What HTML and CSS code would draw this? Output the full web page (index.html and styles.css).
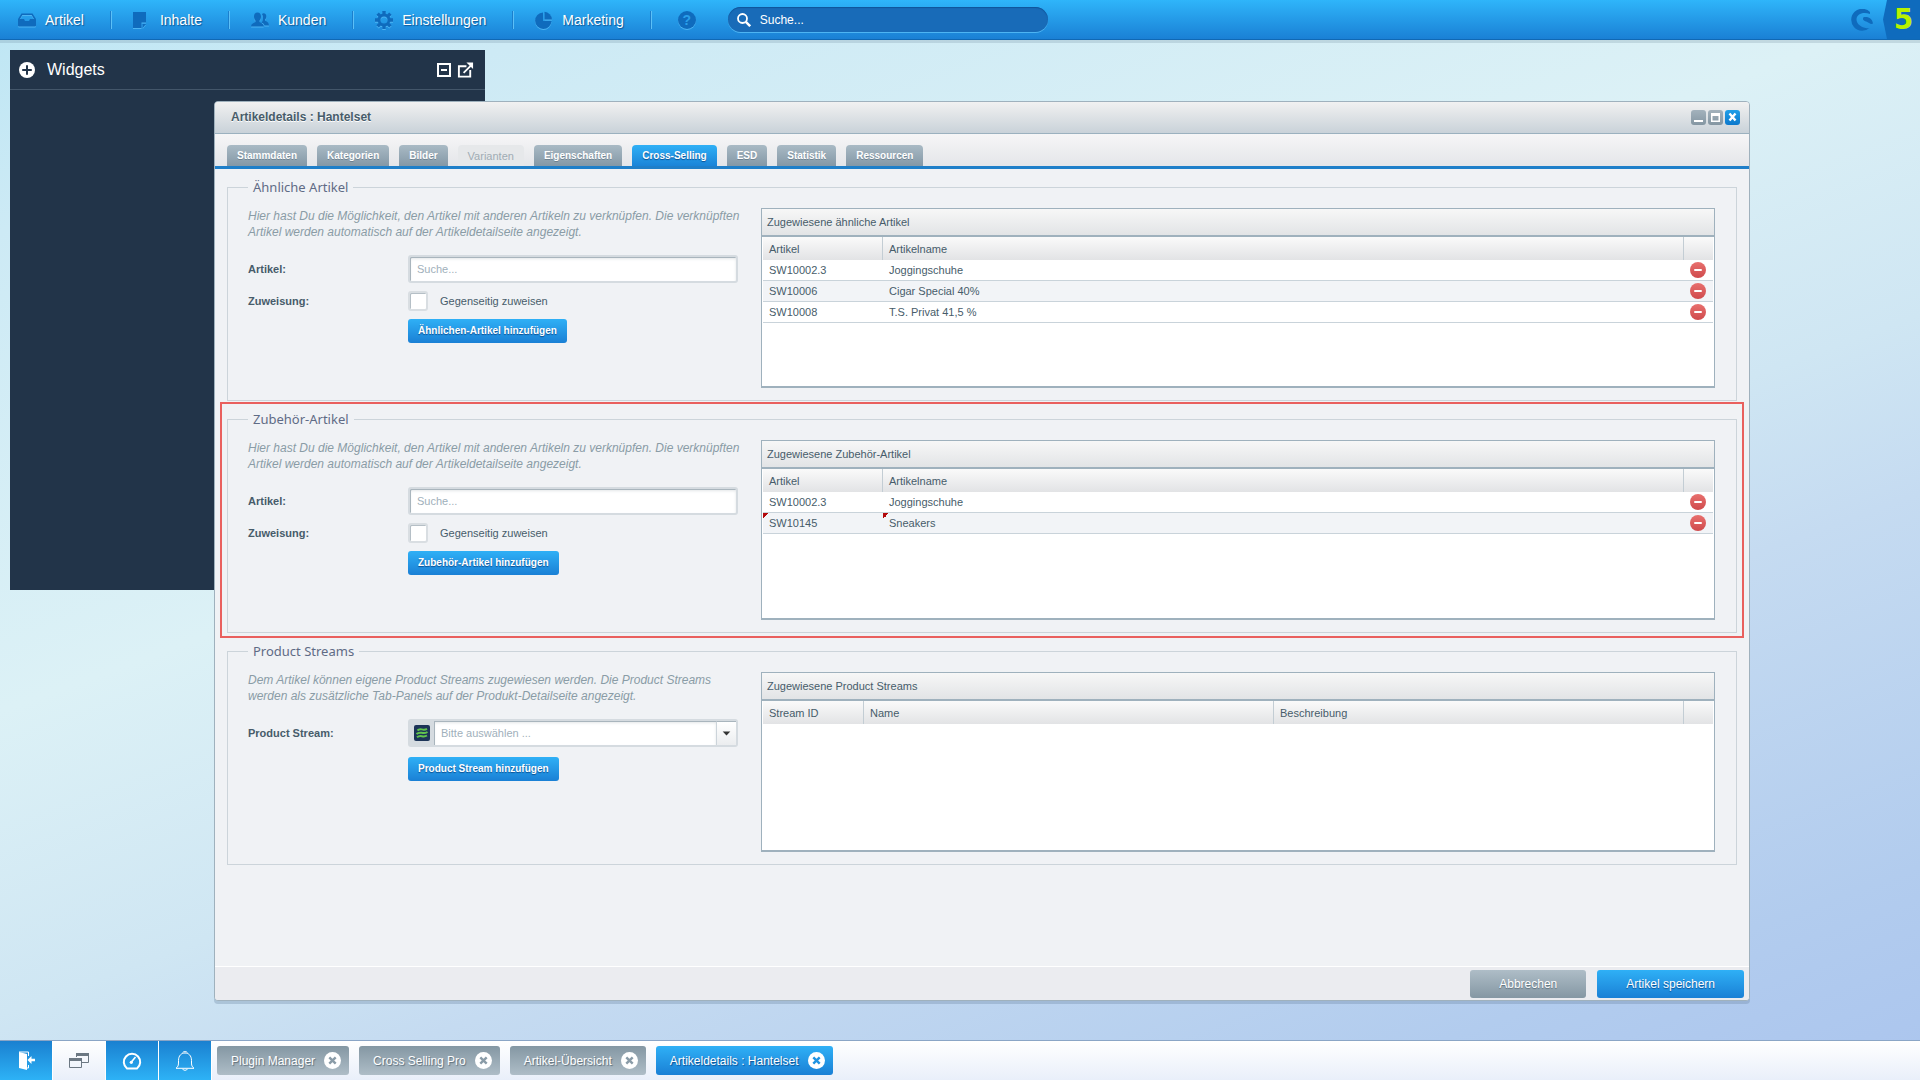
FILE: index.html
```html
<!DOCTYPE html>
<html lang="de">
<head>
<meta charset="utf-8">
<title>Artikeldetails : Hantelset</title>
<link rel="stylesheet" href="styles.css">
</head>
<body>
<svg class="sprite" aria-hidden="true">
  <defs>
    <linearGradient id="red" x1="0" y1="0" x2="0" y2="1"><stop offset="0" stop-color="#e8706e"/><stop offset="1" stop-color="#cf4a4c"/></linearGradient>
    <symbol id="i-remove" viewBox="0 0 16 16"><circle cx="8" cy="8" r="8" fill="url(#red)"/><rect x="4" y="7" width="8" height="2" rx="1" fill="#fff"/></symbol>
    <symbol id="i-close" viewBox="0 0 17 17"><circle cx="8.500" cy="8.500" r="8.500" fill="#fff"/><path d="M5.300 5.300l6.400 6.400M11.700 5.300l-6.400 6.400" stroke="currentColor" stroke-width="2.400"/></symbol>
  </defs>
</svg>

<header class="topbar">
  <nav class="menu">
    <a class="menu-item" href="#"><svg class="menu-icon" viewBox="0 0 18 18"><path d="M3.500 2.500h11L18 8v6.500a1 1 0 0 1-1 1H1a1 1 0 0 1-1-1V8zM4.300 4L2 8h4l1 2h4l1-2h4l-2.300-4z"/></svg>Artikel</a>
    <a class="menu-item" href="#"><svg class="menu-icon" viewBox="0 0 18 18"><path d="M0 1h13v10.500H8.500V17H0zM9.700 13H13l-3.300 4z"/></svg>Inhalte</a>
    <a class="menu-item" href="#"><svg class="menu-icon" viewBox="0 0 18 18"><path d="M11 3c1-1.400 4.300-1.200 4.300 2.200 0 1.800-.5 2.600-1.200 3.400v1.200c1 .8 3.700 1 3.900 4.700h-4.500c-.5-1.800-1.900-2.400-2.900-3 1.600-1.600 1.900-5.500.4-8.500z"/><path d="M6.500 1.500C9 1.500 10 3.300 10 5.500S9.200 8.800 8.500 9.500V11c1.200 1 4 1.300 4.200 4.500H0C.2 12.300 3.300 12 4.500 11V9.500C3.800 8.800 3 7.700 3 5.500s1-4 3.500-4z"/></svg>Kunden</a>
    <a class="menu-item" href="#"><svg class="menu-icon" viewBox="0 0 18 18"><circle cx="9" cy="9" r="5" fill="none" stroke="currentColor" stroke-width="3"/><path d="M9 0v3.500M9 14.500V18M0 9h3.500M14.500 9H18M2.600 2.600l2.500 2.500M12.900 12.900l2.500 2.500M2.600 15.400l2.500-2.500M12.900 5.100l2.500-2.500" stroke="currentColor" stroke-width="3.400"/></svg>Einstellungen</a>
    <a class="menu-item" href="#"><svg class="menu-icon" viewBox="0 0 18 18"><path d="M8 1.500V10h8.500A8.200 8.200 0 1 1 8 1.500z"/><path d="M9.500.8A8.300 8.300 0 0 1 17 8.500H9.500z"/></svg>Marketing</a>
  </nav>
  <button class="help" type="button" aria-label="Hilfe">?</button>
  <label class="search">
    <svg class="search-icon" viewBox="0 0 14 14"><circle cx="5.500" cy="5.500" r="4.500" fill="none" stroke="#fff" stroke-width="1.800"/><path d="M8.800 8.800l4.400 4.400" stroke="#fff" stroke-width="2.400"/></svg>
    <input class="search-input" type="search" placeholder="Suche..." aria-label="Suche">
  </label>
  <svg class="brand" viewBox="0 0 22 22"><path fill="#0f6bbd" d="M19 3A11 11 0 1 0 18.500 19c-1 .3-2.500.4-4 0C10 18 5.500 15 5.500 10.500 5.500 5 12 2.500 19 5z"/><path fill="#0f6bbd" d="M12.500 8.300c3-.8 8.500 0 9.500 6.200-1 .8-2.500.5-4-.5-2-1.400-6-2.200-6-4 0-.8.200-1.400.5-1.700z"/></svg>
  <div class="version">5</div>
</header>

<main class="desktop">
  <section class="widgets">
    <header class="widgets-head">
      <svg class="plus" viewBox="0 0 16 16"><circle cx="8" cy="8" r="8" fill="#fff"/><path d="M8 3.200v9.600M3.200 8h9.600" stroke="#223449" stroke-width="2"/></svg>
      <h2 class="widgets-title">Widgets</h2>
      <svg class="box-icon" viewBox="0 0 14 14"><path d="M1 1h12v12H1zM4 7h6" fill="none" stroke="#fff" stroke-width="2"/></svg>
      <svg class="out-icon" viewBox="0 0 18 18"><path d="M10 5H2v11h12V9" fill="none" stroke="#fff" stroke-width="2"/><path d="M7 12l9-9" stroke="#fff" stroke-width="2"/><path d="M10 1h7v7z" fill="#fff"/></svg>
    </header>
  </section>

  <section class="window">
    <header class="titlebar">
      <h1 class="title">Artikeldetails : Hantelset</h1>
      <button class="ctl" type="button" aria-label="Minimieren"><svg viewBox="0 0 15 15"><path d="M3 11h9" stroke="#fff" stroke-width="2"/></svg></button>
      <button class="ctl" type="button" aria-label="Maximieren"><svg viewBox="0 0 15 15"><path d="M3 3h9v9H3zM4.500 6v4.500h6V6z" fill="#fff" fill-rule="evenodd"/></svg></button>
      <button class="ctl ctl-close" type="button" aria-label="Schließen"><svg viewBox="0 0 15 15"><path d="M4.500 3.500l6 7M10.500 3.500l-6 7" stroke="#fff" stroke-width="2.400"/></svg></button>
    </header>
    <nav class="tabs">
      <button class="tab" type="button">Stammdaten</button>
      <button class="tab" type="button">Kategorien</button>
      <button class="tab" type="button">Bilder</button>
      <button class="tab" type="button" disabled>Varianten</button>
      <button class="tab" type="button">Eigenschaften</button>
      <button class="tab active" type="button">Cross-Selling</button>
      <button class="tab" type="button">ESD</button>
      <button class="tab" type="button">Statistik</button>
      <button class="tab" type="button">Ressourcen</button>
    </nav>

    <form class="body">
      <fieldset class="group">
        <legend class="legend">Ähnliche Artikel</legend>
        <div class="group-cols">
          <div>
            <p class="hint">Hier hast Du die Möglichkeit, den Artikel mit anderen Artikeln zu verknüpfen. Die verknüpften<br>Artikel werden automatisch auf der Artikeldetailseite angezeigt.</p>
            <div class="fields">
              <label class="label" for="similar">Artikel:</label>
              <input class="text" id="similar" type="text" placeholder="Suche...">
              <span class="label">Zuweisung:</span>
              <label class="check"><input class="tick" type="checkbox">Gegenseitig zuweisen</label>
              <button class="btn add" type="button">Ähnlichen-Artikel hinzufügen</button>
            </div>
          </div>
          <section class="panel">
            <h3 class="panel-title">Zugewiesene ähnliche Artikel</h3>
            <table class="grid">
              <colgroup><col class="c-number"><col><col class="c-action"></colgroup>
              <thead><tr><th>Artikel</th><th>Artikelname</th><th></th></tr></thead>
              <tbody>
                <tr><td>SW10002.3</td><td>Joggingschuhe</td><td><button class="remove" type="button" aria-label="Entfernen"><svg><use href="#i-remove"/></svg></button></td></tr>
                <tr><td>SW10006</td><td>Cigar Special 40%</td><td><button class="remove" type="button" aria-label="Entfernen"><svg><use href="#i-remove"/></svg></button></td></tr>
                <tr><td>SW10008</td><td>T.S. Privat 41,5 %</td><td><button class="remove" type="button" aria-label="Entfernen"><svg><use href="#i-remove"/></svg></button></td></tr>
              </tbody>
            </table>
          </section>
        </div>
      </fieldset>

      <div class="marked">
      <fieldset class="group">
        <legend class="legend">Zubehör-Artikel</legend>
        <div class="group-cols">
          <div>
            <p class="hint">Hier hast Du die Möglichkeit, den Artikel mit anderen Artikeln zu verknüpfen. Die verknüpften<br>Artikel werden automatisch auf der Artikeldetailseite angezeigt.</p>
            <div class="fields">
              <label class="label" for="accessory">Artikel:</label>
              <input class="text" id="accessory" type="text" placeholder="Suche...">
              <span class="label">Zuweisung:</span>
              <label class="check"><input class="tick" type="checkbox">Gegenseitig zuweisen</label>
              <button class="btn add" type="button">Zubehör-Artikel hinzufügen</button>
            </div>
          </div>
          <section class="panel">
            <h3 class="panel-title">Zugewiesene Zubehör-Artikel</h3>
            <table class="grid">
              <colgroup><col class="c-number"><col><col class="c-action"></colgroup>
              <thead><tr><th>Artikel</th><th>Artikelname</th><th></th></tr></thead>
              <tbody>
                <tr><td>SW10002.3</td><td>Joggingschuhe</td><td><button class="remove" type="button" aria-label="Entfernen"><svg><use href="#i-remove"/></svg></button></td></tr>
                <tr><td class="dirty">SW10145</td><td class="dirty">Sneakers</td><td><button class="remove" type="button" aria-label="Entfernen"><svg><use href="#i-remove"/></svg></button></td></tr>
              </tbody>
            </table>
          </section>
        </div>
      </fieldset>
      </div>

      <fieldset class="group">
        <legend class="legend">Product Streams</legend>
        <div class="group-cols">
          <div>
            <p class="hint">Dem Artikel können eigene Product Streams zugewiesen werden. Die Product Streams<br>werden als zusätzliche Tab-Panels auf der Produkt-Detailseite angezeigt.</p>
            <div class="fields fields-stream">
              <label class="label" for="stream">Product Stream:</label>
              <div class="combo">
                <svg class="stream-icon" viewBox="0 0 16 16"><rect width="16" height="16" rx="2" fill="#1c3458"/><path d="M3.500 5.500c3-3.500 5 1 9.500-1.700M2.500 9c4-3.500 6 1 11-2M3 12.300c4-3.500 5.500 1 10-1.800" fill="none" stroke="#62c44d" stroke-width="2"/></svg>
                <select class="combo-select" id="stream"><option>Bitte auswählen ...</option></select>
                <svg class="combo-arrow" viewBox="0 0 20 24"><path d="M6 10h8l-4 4z" fill="#333"/></svg>
              </div>
              <button class="btn add" type="button">Product Stream hinzufügen</button>
            </div>
          </div>
          <section class="panel">
            <h3 class="panel-title">Zugewiesene Product Streams</h3>
            <table class="grid">
              <colgroup><col class="c-id"><col><col><col class="c-action"></colgroup>
              <thead><tr><th>Stream ID</th><th>Name</th><th>Beschreibung</th><th></th></tr></thead>
            </table>
          </section>
        </div>
      </fieldset>
    </form>

    <footer class="actions">
      <button class="btn big grey" type="button">Abbrechen</button>
      <button class="btn big" type="button">Artikel speichern</button>
    </footer>
  </section>
</main>

<footer class="taskbar">
  <button class="task-icon" type="button" aria-label="Abmelden"><svg viewBox="0 0 20 20"><path d="M3 1l8 2v16l-8-2z" fill="#fff"/><path d="M3 1h9.500v4M12.500 14v3H11" fill="none" stroke="#fff"/><path d="M11.500 9l4-4v2.700H19v2.600h-3.500V13z" fill="#fff"/></svg></button>
  <button class="task-icon light" type="button" aria-label="Fenster"><svg viewBox="0 0 20 20"><path d="M7.500 6V2.500h12v9H13M.500 7.500h12v9H.500z" fill="none" stroke="#6c7883"/><path d="M7 2h13v3H7zM0 7h13v3H0z" fill="#6c7883"/></svg></button>
  <button class="task-icon" type="button" aria-label="Dashboard"><svg viewBox="0 0 20 20"><path d="M5 17.500a8.200 8.200 0 1 1 10 0z" fill="none" stroke="#fff" stroke-width="2"/><path d="M9 11.500l4.500-5.500" stroke="#fff" stroke-width="1.600"/><circle cx="9.300" cy="11.300" r="1.600" fill="#fff"/></svg></button>
  <button class="task-icon" type="button" aria-label="Meldungen"><svg viewBox="0 0 20 20"><path d="M1 17.300h18c-2.800-2-2.500-4-2.500-7.800C16.500 4.500 13.500 2 10 2S3.500 4.500 3.500 9.500c0 3.800.3 5.800-2.500 7.800zM7.500 1.700C8 .3 12 .3 12.500 1.700M7.500 17.800c.5 2 4.500 2 5 0" fill="none" stroke="#fff"/></svg></button>
  <div class="tasks">
    <button class="task" type="button">Plugin Manager<svg><use href="#i-close"/></svg></button>
    <button class="task" type="button">Cross Selling Pro<svg><use href="#i-close"/></svg></button>
    <button class="task" type="button">Artikel-Übersicht<svg><use href="#i-close"/></svg></button>
    <button class="task current" type="button">Artikeldetails : Hantelset<svg><use href="#i-close"/></svg></button>
  </div>
</footer>
</body>
</html>
```
FILE: styles.css
```css
* { box-sizing: border-box; }

body {
  margin: 0;
  min-height: 100vh;
  display: flex;
  flex-direction: column;
  font: 11px/16px "Liberation Sans", Arial, sans-serif;
  color: #475c6a;
  background: linear-gradient(160deg, #bde6f4 0%, #cdeaf5 13%, #dcf1f6 40%, #cfe6f3 57%, #c5dbf1 67%, #b2ccee 88%, #abc5ee 100%);
}

button, input, select { font: inherit; color: inherit; margin: 0; }
button { border: 0; padding: 0; background: none; }
h1, h2, h3, p { margin: 0; font-weight: normal; }
svg { display: block; }
.sprite { position: absolute; width: 0; height: 0; }

/* Top menu */
.topbar {
  height: 40px;
  flex: none;
  display: flex;
  align-items: center;
  background: linear-gradient(#2fb5fa, #1a80d5);
  border-bottom: 1px solid #1068b4;
  box-shadow: 0 3px 0 rgba(90, 120, 140, .2);
}
.menu { display: flex; align-items: center; }
.menu-item {
  display: flex;
  align-items: center;
  gap: 9px;
  height: 18px;
  padding: 0 27px 0 21px;
  border-right: 1px solid #5cc0f7;
  box-shadow: inset -1px 0 0 #1b7fcd;
  font-size: 14px;
  color: #fff;
  text-decoration: none;
  text-shadow: 1px 1px 1px rgba(0, 50, 100, .6);
}
.menu-item:first-child { padding-left: 18px; }
.menu-icon { width: 18px; height: 18px; color: #0f6bbd; fill: #0f6bbd; fill-rule: evenodd; filter: drop-shadow(0 1px 0 #4db4f3); }
.help {
  width: 18px;
  height: 18px;
  margin: 0 32px 0 26px;
  border-radius: 50%;
  background: #0f6bbd;
  box-shadow: 0 1px 0 #4db4f3;
  color: #2a9fea;
  font-size: 14px;
  font-weight: bold;
  line-height: 18px;
}
.search {
  width: 320px;
  height: 25px;
  display: flex;
  align-items: center;
  gap: 9px;
  padding: 0 9px;
  border-radius: 13px;
  background: #186bb8;
  box-shadow: inset 0 1px 1px #0f559b, 0 1px 0 #4db4f3;
}
.search-icon { width: 14px; height: 14px; }
.search-input { flex: 1; min-width: 0; border: 0; padding: 0; background: none; font-size: 12px; color: #fff; outline: 0; }
.search-input::placeholder { color: #fff; opacity: 1; }
.brand { width: 22px; height: 22px; margin: 0 10px 0 auto; }
.version {
  width: 37px;
  height: 39px;
  padding-left: 4px;
  background: #0f6bbd;
  clip-path: polygon(4px 0, 100% 0, 100% 100%, 4px 100%, 0 50%);
  font: bold 28px/40px "DejaVu Sans", sans-serif;
  text-align: center;
  color: #b8f200;
}

/* Desktop */
.desktop { flex: 1; position: relative; min-height: 940px; }

.widgets { position: absolute; left: 10px; top: 10px; width: 475px; height: 540px; background: #223449; }
.widgets-head { display: flex; align-items: center; height: 40px; padding: 0 11px 0 9px; border-bottom: 1px solid #43566a; color: #fff; }
.plus { width: 16px; height: 16px; }
.widgets-title { flex: 1; margin-left: 12px; font-size: 16px; line-height: 20px; }
.box-icon { width: 14px; height: 14px; margin-right: 6px; }
.out-icon { width: 17px; height: 18px; }

/* Window */
.window {
  position: absolute;
  left: 214px;
  right: 170px;
  top: 61px;
  bottom: 39px;
  display: flex;
  flex-direction: column;
  border: 1px solid #9fb1bd;
  border-radius: 4px;
  background: #f0f2f5;
  box-shadow: 0 3px 0 rgba(100, 125, 155, .3);
  overflow: hidden;
}
.titlebar {
  height: 32px;
  flex: none;
  display: flex;
  align-items: center;
  gap: 2px;
  padding: 0 9px 1px 16px;
  background: linear-gradient(#f1f1f1, #c9d2d9);
  border-bottom: 1px solid #9bb1bf;
}
.title { flex: 1; font-size: 12px; font-weight: bold; text-shadow: 0 1px 0 #fff; }
.ctl { width: 15px; height: 15px; border-radius: 3px; background: linear-gradient(#a3b2bc, #8496a2); }
.ctl-close { background: linear-gradient(#1f9fe8, #0c78cc); }

.tabs {
  height: 35px;
  flex: none;
  display: flex;
  align-items: flex-end;
  gap: 10px;
  padding: 0 12px;
  background: linear-gradient(#f6f6f7, #e4e6e9);
  border-bottom: 3px solid #1f7fc9;
}
.tab {
  height: 21px;
  padding: 0 10px;
  border-radius: 4px 4px 0 0;
  background: linear-gradient(#a9bac5, #8498a6);
  color: #fff;
  font-size: 10px;
  font-weight: bold;
  text-shadow: 0 1px 0 rgba(60, 80, 95, .4);
}
.tab:disabled { background: #e6e8ea; color: #a0acb4; font-size: 11px; font-weight: normal; text-shadow: none; }
.tab.active { background: linear-gradient(#2fb0f6, #1a84d8); text-shadow: 0 1px 1px #0b4f92; }

.body { flex: 1; padding: 9px 12px; display: flex; flex-direction: column; gap: 9px; border-bottom: 1px solid #fff; }
.group { min-width: 0; margin: 0; padding: 12px 21px 12px 20px; border: 1px solid #ccd4da; }
.legend { padding: 0 5px; font: 13px/18px "Noto Sans", Tahoma, sans-serif; color: #5f6b85; }
.group-cols { display: grid; grid-template-columns: 493px 1fr; gap: 20px; }
.marked { position: relative; }
.marked::before { content: ""; position: absolute; inset: -8px -7px -5px -7px; border: 2px solid #e9605e; }

.hint { font-size: 12px; font-style: italic; color: #8a9ca6; white-space: nowrap; }
.fields { display: grid; grid-template-columns: 160px 330px; row-gap: 8px; align-items: center; margin-top: 15px; }
.fields-stream { row-gap: 10px; }
.label { font-weight: bold; }
.text {
  height: 28px;
  padding: 0 7px;
  border: 2px solid #d5dbe0;
  border-radius: 3px;
  background: #fff;
  box-shadow: inset 1px 1px 0 #a9b5bd, inset 0 2px 3px #e3e6e8;
}
.text::placeholder { color: #9fb0bb; opacity: 1; }
.check { display: flex; align-items: center; gap: 12px; height: 20px; }
.tick { appearance: none; width: 20px; height: 20px; border: 2px solid #d9dee2; border-radius: 3px; background: #fff; box-shadow: inset 1px 1px 0 #b5bfc6; }

.btn {
  height: 24px;
  padding: 0 10px;
  border-radius: 3px;
  background: linear-gradient(#2fb0f6, #1a80d5);
  color: #fff;
  font-size: 10px;
  font-weight: bold;
  text-shadow: 0 1px 1px #0b4f92;
}
.btn.add { grid-column: 2; justify-self: start; }
.btn.big { height: 28px; padding: 0 29px; font-size: 12px; font-weight: normal; }
.btn.grey { background: linear-gradient(#aebdc7, #8497a3); text-shadow: 0 1px 1px #5d6f7b; }

.combo { display: flex; align-items: center; height: 28px; border: 2px solid #d5dbe0; border-radius: 3px; background: #d5dbe0; }
.stream-icon { width: 16px; height: 16px; margin: 0 4px; }
.combo-select {
  appearance: none;
  flex: 1;
  height: 24px;
  padding: 0 7px;
  border: 0;
  border-radius: 0;
  background: #fff;
  box-shadow: inset 1px 1px 0 #a9b5bd, inset 0 2px 3px #e3e6e8;
  color: #9fb0bb;
}
.combo-arrow { width: 20px; height: 24px; background: linear-gradient(#fff, #ebedef); border-left: 1px solid #ccd4da; border-top: 1px solid #a9b5bd; }

/* Grids */
.panel { height: 180px; border: 1px solid #9fb1bd; border-bottom-width: 2px; background: #fff; }
.panel-title { height: 28px; padding: 0 5px; line-height: 26px; font-size: 11px; background: linear-gradient(#f7f7f7, #e2e4e6); border-bottom: 2px solid #9fb1bd; }
.grid { width: 100%; table-layout: fixed; border-collapse: separate; border-spacing: 0; padding: 0 1px; }
.c-number { width: 120px; }
.c-id { width: 101px; }
.c-action { width: 29px; }
.grid th { height: 23px; padding: 0 6px; text-align: left; font-weight: normal; background: linear-gradient(#fafafa, #e2e3e5); border-right: 1px solid #c3cdd4; }
.grid th:last-child { border-right: 0; }
.grid td { height: 21px; padding: 0 6px; line-height: 20px; border-bottom: 1px solid #c9d3da; }
.grid tbody tr:nth-child(even) td { background-color: #f2f4f7; }
.grid td.dirty { background-image: linear-gradient(135deg, #b4090c 50%, transparent 50%); background-size: 6px 6px; background-repeat: no-repeat; }
.remove, .remove svg { display: block; width: 16px; height: 16px; }

.actions { height: 33px; flex: none; display: flex; justify-content: flex-end; align-items: center; gap: 11px; padding: 0 5px; background: #ebecf0; }

/* Taskbar */
.taskbar { height: 40px; flex: none; display: flex; border-top: 1px solid #8aa5c6; background: linear-gradient(#fff, #e9effa); }
.task-icon { width: 53px; display: flex; justify-content: center; align-items: center; background: linear-gradient(#1a80d0, #2db2f6); border-right: 1px solid #fff; }
.task-icon.light { background: none; }
.task-icon svg { width: 20px; height: 20px; }
.tasks { display: flex; align-items: center; gap: 10px; padding-left: 5px; }
.task {
  height: 29px;
  display: flex;
  align-items: center;
  gap: 9px;
  padding: 0 8px 0 14px;
  border-radius: 3px;
  background: linear-gradient(#8497a3, #aebdc7);
  color: #fff;
  font-size: 12px;
  text-shadow: 1px 1px 1px #5d6f7b;
}
.task svg { width: 17px; height: 17px; color: #8a9ca8; }
.task.current { background: linear-gradient(#2fb0f6, #1a80d5); text-shadow: 1px 1px 1px #0b4f92; }
.task.current svg { color: #1f93e2; }
```
